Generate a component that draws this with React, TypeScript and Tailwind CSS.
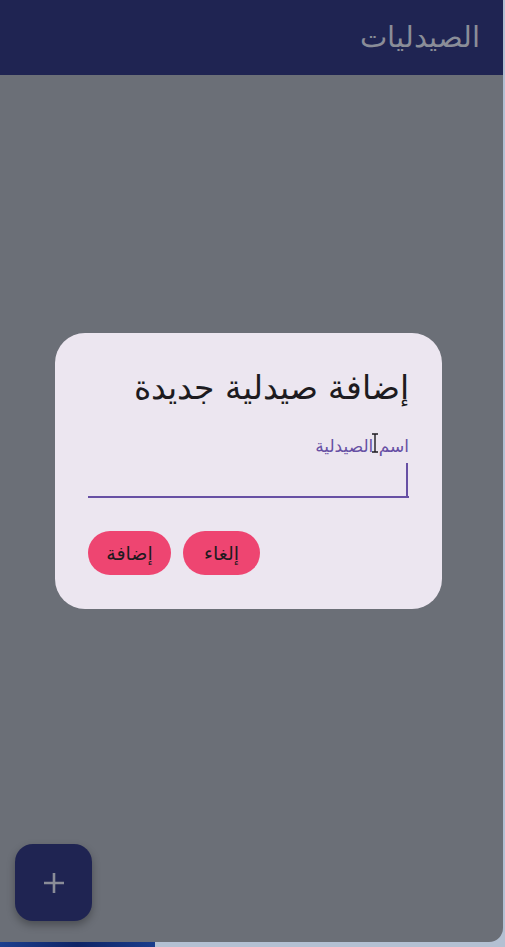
import React from "react";

const AR = "font-['DejaVu_Sans',sans-serif]";

export default function App() {
  return (
    <div className="w-[505px] h-[947px] bg-[#b3c0d2] relative overflow-hidden">
      {/* desktop sliver under the phone */}
      <div className="absolute left-0 bottom-0 w-[155px] h-[6px] bg-[linear-gradient(90deg,#1c3f8e,#0f2466,#1a3d8c)]" />

      <div dir="rtl" className={`relative w-[503px] h-[942px] rounded-br-[14px] overflow-hidden bg-[#6b6f77] ${AR}`}>
        <header className="h-[75px] bg-[#1f2452] flex items-center px-[23px]">
          <h1 className="text-[29px] leading-none text-[#8a8d98] font-light">الصيدليات</h1>
        </header>

        {/* FAB */}
        <button className="absolute left-[15px] top-[844px] w-[77px] h-[77px] rounded-[18px] bg-[#1f2452] shadow-[0_4px_8px_rgba(0,0,0,0.3)] flex items-center justify-center">
          <svg width="24" height="24" viewBox="0 0 24 24" fill="none" stroke="#8a8d98" strokeWidth="2.6">
            <path d="M12 2v20M2 12h20" />
          </svg>
        </button>

        {/* dialog */}
        <div className="absolute inset-0 flex items-center justify-center pr-[6px]">
          <div className="relative w-[387px] h-[276px] rounded-[30px] bg-[#ece6f0] px-[33px] pt-[32px] flex flex-col">
            <h2 className="text-[33px] leading-[46px] text-[#1d1b20] font-light">إضافة صيدلية جديدة</h2>

            <div className="mt-[25px] flex flex-col">
              <label className="text-[17px] leading-[20px] text-[#6750a4]">اسم الصيدلية</label>
              <div className="h-[42px] border-b-2 border-[#6750a4] flex items-start pt-[7px] pr-[1px]">
                <span className="w-[2px] h-[33px] bg-[#6750a4]" />
              </div>
            </div>

            <div className="mt-[33px] flex justify-end gap-[12px]">
              <button className="h-[44px] w-[77px] rounded-full bg-[#ee4571] text-[19px] text-[#1d1b20]">إلغاء</button>
              <button className="h-[44px] w-[83px] rounded-full bg-[#ee4571] text-[19px] text-[#1d1b20]">إضافة</button>
            </div>

            {/* mouse I-beam cursor */}
            <svg className="absolute left-[316px] top-[100px]" width="8" height="20" viewBox="0 0 8 20" fill="none" stroke="#1d1b20" strokeWidth="1.4">
              <path d="M1 1h6M4 1v18M1 19h6" />
            </svg>
          </div>
        </div>
      </div>
    </div>
  );
}
